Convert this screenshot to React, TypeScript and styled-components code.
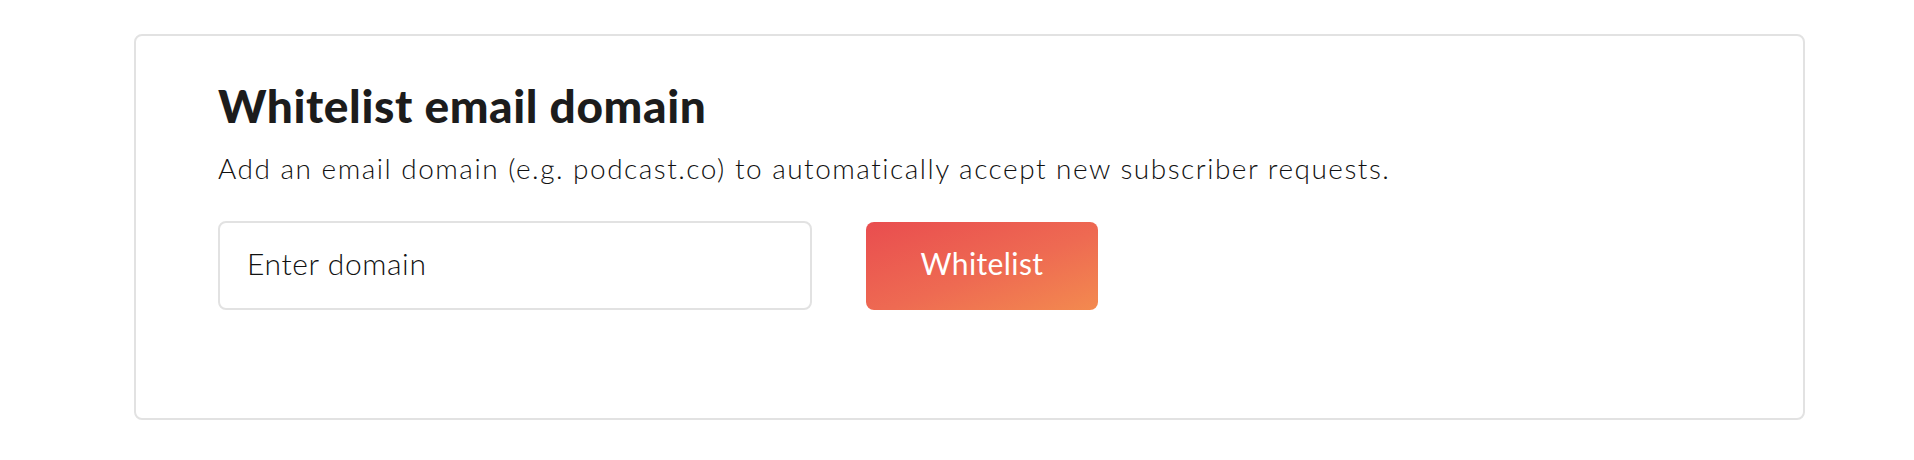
import React from 'react';
import styled, { createGlobalStyle } from 'styled-components';

const GlobalStyle = createGlobalStyle`
  body {
    margin: 0;
    background: #ffffff;
    font-family: 'Lato', 'Liberation Sans', sans-serif;
    color: #1c1c1c;
  }
`;

const Page = styled.div`
  padding: 34px 109px 0 134px;
`;

const Card = styled.section`
  box-sizing: border-box;
  height: 386px;
  border: 2px solid #e2e2e2;
  border-radius: 8px;
  padding: 42px 82px 0;
`;

const Title = styled.h2`
  margin: 0;
  font-size: 46px;
  line-height: 56px;
  font-weight: 900;
  letter-spacing: 0.6px;
  color: #1c1c1c;
`;

const Description = styled.p`
  margin: 16px 0 0;
  font-size: 28px;
  line-height: 36px;
  font-weight: 300;
  letter-spacing: 1.5px;
  color: #111111;
`;

const Row = styled.div`
  display: flex;
  align-items: center;
  gap: 54px;
  margin-top: 35px;
`;

const DomainInput = styled.input`
  box-sizing: border-box;
  width: 594px;
  height: 89px;
  padding: 0 27px 6px;
  border: 2px solid #e2e2e2;
  border-radius: 8px;
  font-family: inherit;
  font-size: 30px;
  font-weight: 300;
  letter-spacing: 0.6px;
  color: #111111;
  outline: none;

  &::placeholder {
    color: #111111;
    opacity: 1;
  }
`;

const Button = styled.button`
  width: 232px;
  height: 88px;
  padding: 0 0 5px;
  border: none;
  border-radius: 8px;
  background: linear-gradient(160deg, #e94d4f 0%, #ee6a52 55%, #f38a4f 100%);
  color: #ffffff;
  font-family: inherit;
  font-size: 30px;
  font-weight: 400;
  letter-spacing: 0.4px;
  cursor: pointer;
`;

const App: React.FC = () => {
  return (
    <Page>
      <GlobalStyle />
      <Card>
        <Title>Whitelist email domain</Title>
        <Description>
          Add an email domain (e.g. podcast.co) to automatically accept new subscriber requests.
        </Description>
        <Row>
          <DomainInput placeholder="Enter domain" />
          <Button>Whitelist</Button>
        </Row>
      </Card>
    </Page>
  );
};

export default App;
